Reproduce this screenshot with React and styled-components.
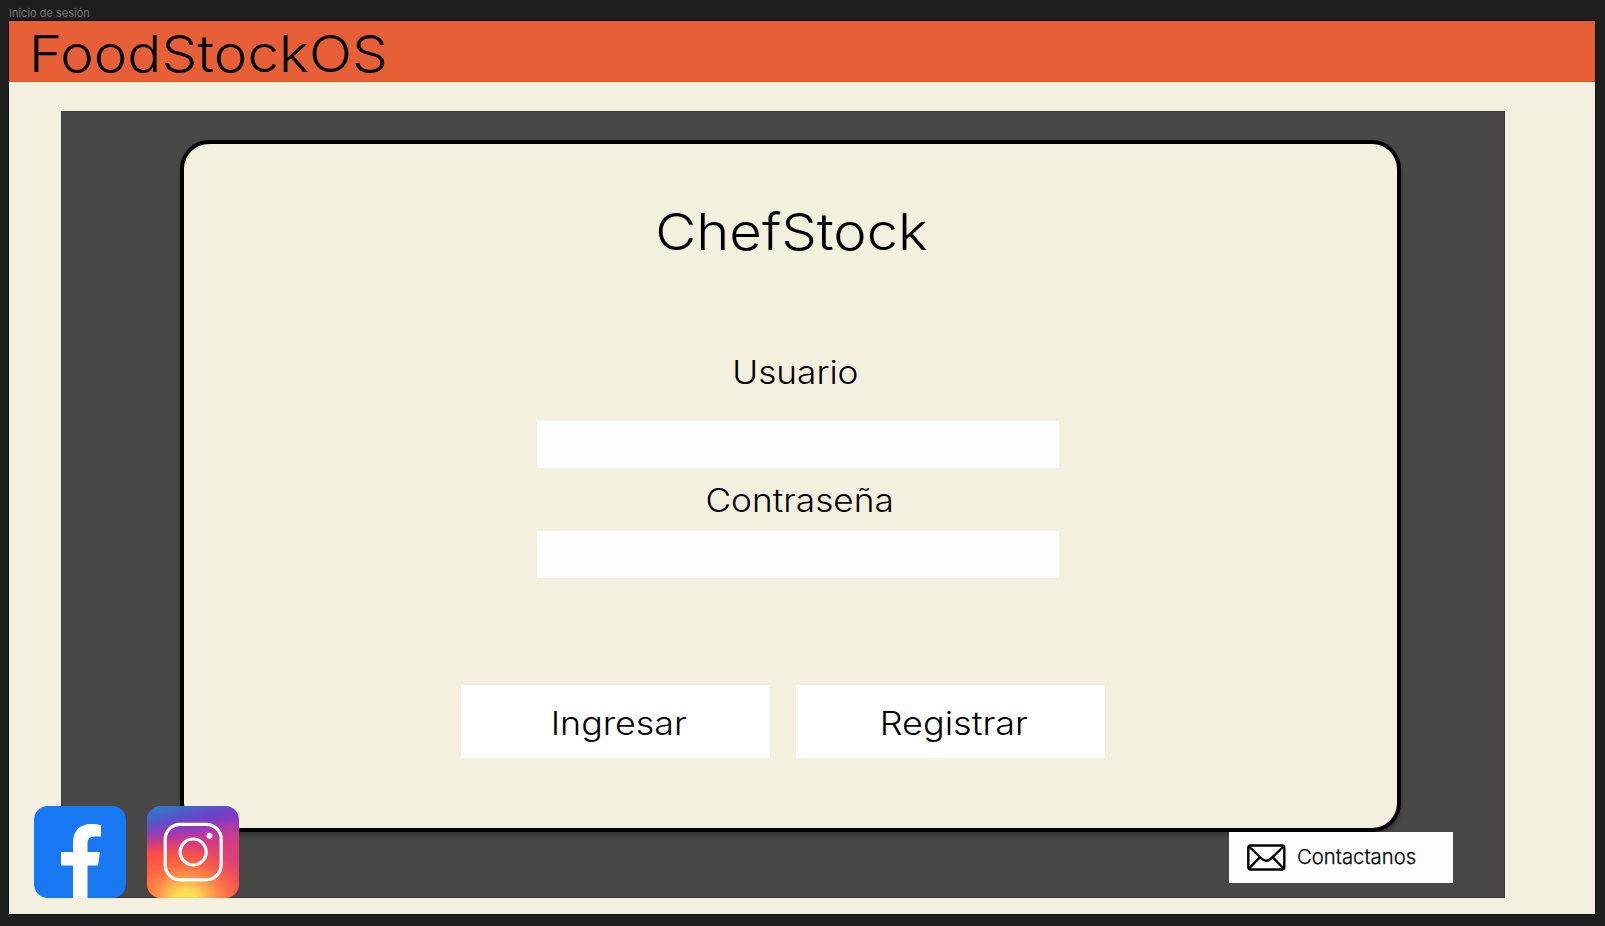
import React from "react";
import styled, { createGlobalStyle } from "styled-components";

const GlobalStyle = createGlobalStyle`
  * { box-sizing: border-box; }
  body { margin: 0; background: #1e1e1e; overflow: hidden; }
`;

const Canvas = styled.div`
  width: 1605px;
  height: 926px;
  padding: 0 9px;
  background: #1e1e1e;
  font-family: Inter, "Liberation Sans", sans-serif;
  font-weight: 300;
  color: #000;
`;

const FrameName = styled.div`
  height: 21px;
  padding-top: 6px;
  font: 400 11px/14px Inter, sans-serif;
  color: #767676;
`;

const Frame = styled.main`
  position: relative;
  width: 1586px;
  height: 893px;
  background: #f3f0df;
  outline: 1px solid #101416;
`;

const Header = styled.header`
  height: 61px;
  padding: 1px 0 0 20px;
  background: #e65f37;
  border-bottom: 1px solid #e8530f;
`;

const Heading = styled.h1`
  width: max-content;
  margin: 0;
  font-size: 51px;
  font-weight: 300;
  line-height: 64px;
  white-space: nowrap;
  transform: scaleX(${(p) => p.$stretch});
  transform-origin: ${(p) => p.$origin || "left"};
`;

const Panel = styled.section`
  width: 1444px;
  height: 787px;
  margin: 29px 0 0 52px;
  padding: 28px 0 0 118px;
  background: #4a4846;
  border: 1px solid #3b3a38;
`;

const Card = styled.form`
  display: flex;
  flex-direction: column;
  width: 1221px;
  height: 692px;
  padding-top: 56px;
  background: #f3f0df;
  border: 4px solid #000;
  border-radius: 29px;
  box-shadow: 0 4px 4px rgba(0, 0, 0, 0.25);
`;

const CardTitle = styled.div`
  display: flex;
  justify-content: center;
  height: 153px;
  padding-left: 3px;
`;

const Label = styled.label`
  display: flex;
  justify-content: center;
  height: ${(p) => p.$height}px;
  padding: ${(p) => p.$top}px 0 0 ${(p) => p.$shift}px;
  font-size: 32px;
  line-height: 40px;
`;

const Stretch = styled.span`
  display: block;
  white-space: nowrap;
  transform: scaleX(${(p) => p.$by});
`;

const Field = styled.input`
  width: 522px;
  height: 47px;
  margin: 0 0 0 353px;
  border: 0;
  padding: 0 12px;
  background: #fdfdfd;
  font: inherit;
  font-size: 24px;
  outline: none;
`;

const Actions = styled.div`
  display: flex;
  gap: 26px;
  margin: 107px 0 0 277px;
`;

const Action = styled.button`
  display: flex;
  justify-content: center;
  align-items: center;
  width: 309px;
  height: 73px;
  padding: 3px 0 0 ${(p) => p.$shift}px;
  border: 0;
  background: #fff;
  color: #000;
  font: inherit;
  font-size: 32px;
`;

const Socials = styled.nav`
  position: absolute;
  left: 25px;
  top: 785px;
  display: flex;
  gap: 20.500px;
`;

const SocialLink = styled.a`
  width: 92px;
  height: 92px;
  border-radius: 14px;
  overflow: hidden;
  svg { display: block; }
`;

const Contact = styled.a`
  position: absolute;
  left: 1220px;
  top: 811px;
  display: flex;
  align-items: center;
  gap: 11px;
  width: 224px;
  height: 51px;
  padding-left: 18px;
  background: #fdfdfd;
  font: 300 20.300px/24px Inter, sans-serif;
`;

const ContactText = styled.span`
  margin-top: -2px;
  -webkit-text-stroke: 0.250px #000;
`;

const FacebookLogo = () => (
  <svg width="92" height="92" viewBox="0 0 92 92">
    <rect width="92" height="92" fill="#1877f2" />
    <path fill="#fff" d="M39 92V59.5H27V46H39V37C39 24.500 46 18 57 18C61 18 64.500 18.500 67 19V30.500H61C55.500 30.500 53.500 33 53.500 37.500V46H66L64 59.500H53.500V92Z" />
  </svg>
);

const InstagramLogo = () => (
  <svg width="92" height="92" viewBox="0 0 92 92">
    <defs>
      <linearGradient id="base" x1="0.45" y1="1" x2="0.5" y2="0">
        <stop offset="0.3" stopColor="#ff543e" />
        <stop offset="0.46" stopColor="#fa4e4a" />
        <stop offset="0.6" stopColor="#d03c80" />
        <stop offset="0.72" stopColor="#aa38b0" />
        <stop offset="0.88" stopColor="#8438c8" />
      </linearGradient>
      <radialGradient id="glow" gradientUnits="userSpaceOnUse" cx="0" cy="0" r="1" gradientTransform="translate(39 91) scale(68 50)">
        <stop offset="0.15" stopColor="#ffdd55" />
        <stop offset="0.5" stopColor="#ff8f48" stopOpacity="0.8" />
        <stop offset="1" stopColor="#ff543e" stopOpacity="0" />
      </radialGradient>
      <linearGradient id="sky" gradientUnits="userSpaceOnUse" x1="14" y1="0" x2="24" y2="36">
        <stop offset="0.15" stopColor="#3771c8" />
        <stop offset="1" stopColor="#6a35cc" stopOpacity="0" />
      </linearGradient>
      <radialGradient id="rose" cx="1" cy="0.55" r="0.5">
        <stop offset="0" stopColor="#d83c80" />
        <stop offset="1" stopColor="#e0407a" stopOpacity="0" />
      </radialGradient>
    </defs>
    <rect width="92" height="92" fill="url(#base)" />
    <rect width="92" height="92" fill="url(#rose)" />
    <rect width="92" height="92" fill="url(#glow)" />
    <rect width="92" height="92" fill="url(#sky)" />
    <g fill="none" stroke="#fff" strokeWidth="3.200">
      <rect x="18.200" y="18.300" width="56" height="55.500" rx="15" />
      <circle cx="46.200" cy="46" r="13" />
    </g>
    <circle cx="62.500" cy="29.700" r="3" fill="#fff" />
  </svg>
);

const Envelope = () => (
  <svg width="39" height="27" viewBox="0 0 39 27" fill="none" stroke="#000" strokeWidth="2.400" strokeLinejoin="round">
    <rect x="1.300" y="1.500" width="36" height="24" rx="2.500" />
    <path d="M2 2.500L14.500 14.500Q19.300 19 24.100 14.500L36.600 2.500M2 24.500L13 13.200M36.600 24.500L25.600 13.200" />
  </svg>
);

export default function App() {
  return (
    <Canvas>
      <GlobalStyle />
      <FrameName>Inicio de sesión</FrameName>
      <Frame>
        <Header>
          <Heading $stretch={1.112}>FoodStockOS</Heading>
        </Header>
        <Panel>
          <Card>
            <CardTitle>
              <Heading as="h2" $stretch={1.104} $origin="center">ChefStock</Heading>
            </CardTitle>
            <Label $height={68} $top={0} $shift={10}><Stretch $by={1.1}>Usuario</Stretch></Label>
            <Field />
            <Label $height={63} $top={13} $shift={18}><Stretch $by={1.1}>Contraseña</Stretch></Label>
            <Field type="password" />
            <Actions>
              <Action type="button" $shift={6}><Stretch $by={1.12}>Ingresar</Stretch></Action>
              <Action type="button" $shift={6}><Stretch $by={1.125}>Registrar</Stretch></Action>
            </Actions>
          </Card>
        </Panel>
        <Socials>
          <SocialLink><FacebookLogo /></SocialLink>
          <SocialLink><InstagramLogo /></SocialLink>
        </Socials>
        <Contact>
          <Envelope />
          <ContactText>Contactanos</ContactText>
        </Contact>
      </Frame>
    </Canvas>
  );
}
